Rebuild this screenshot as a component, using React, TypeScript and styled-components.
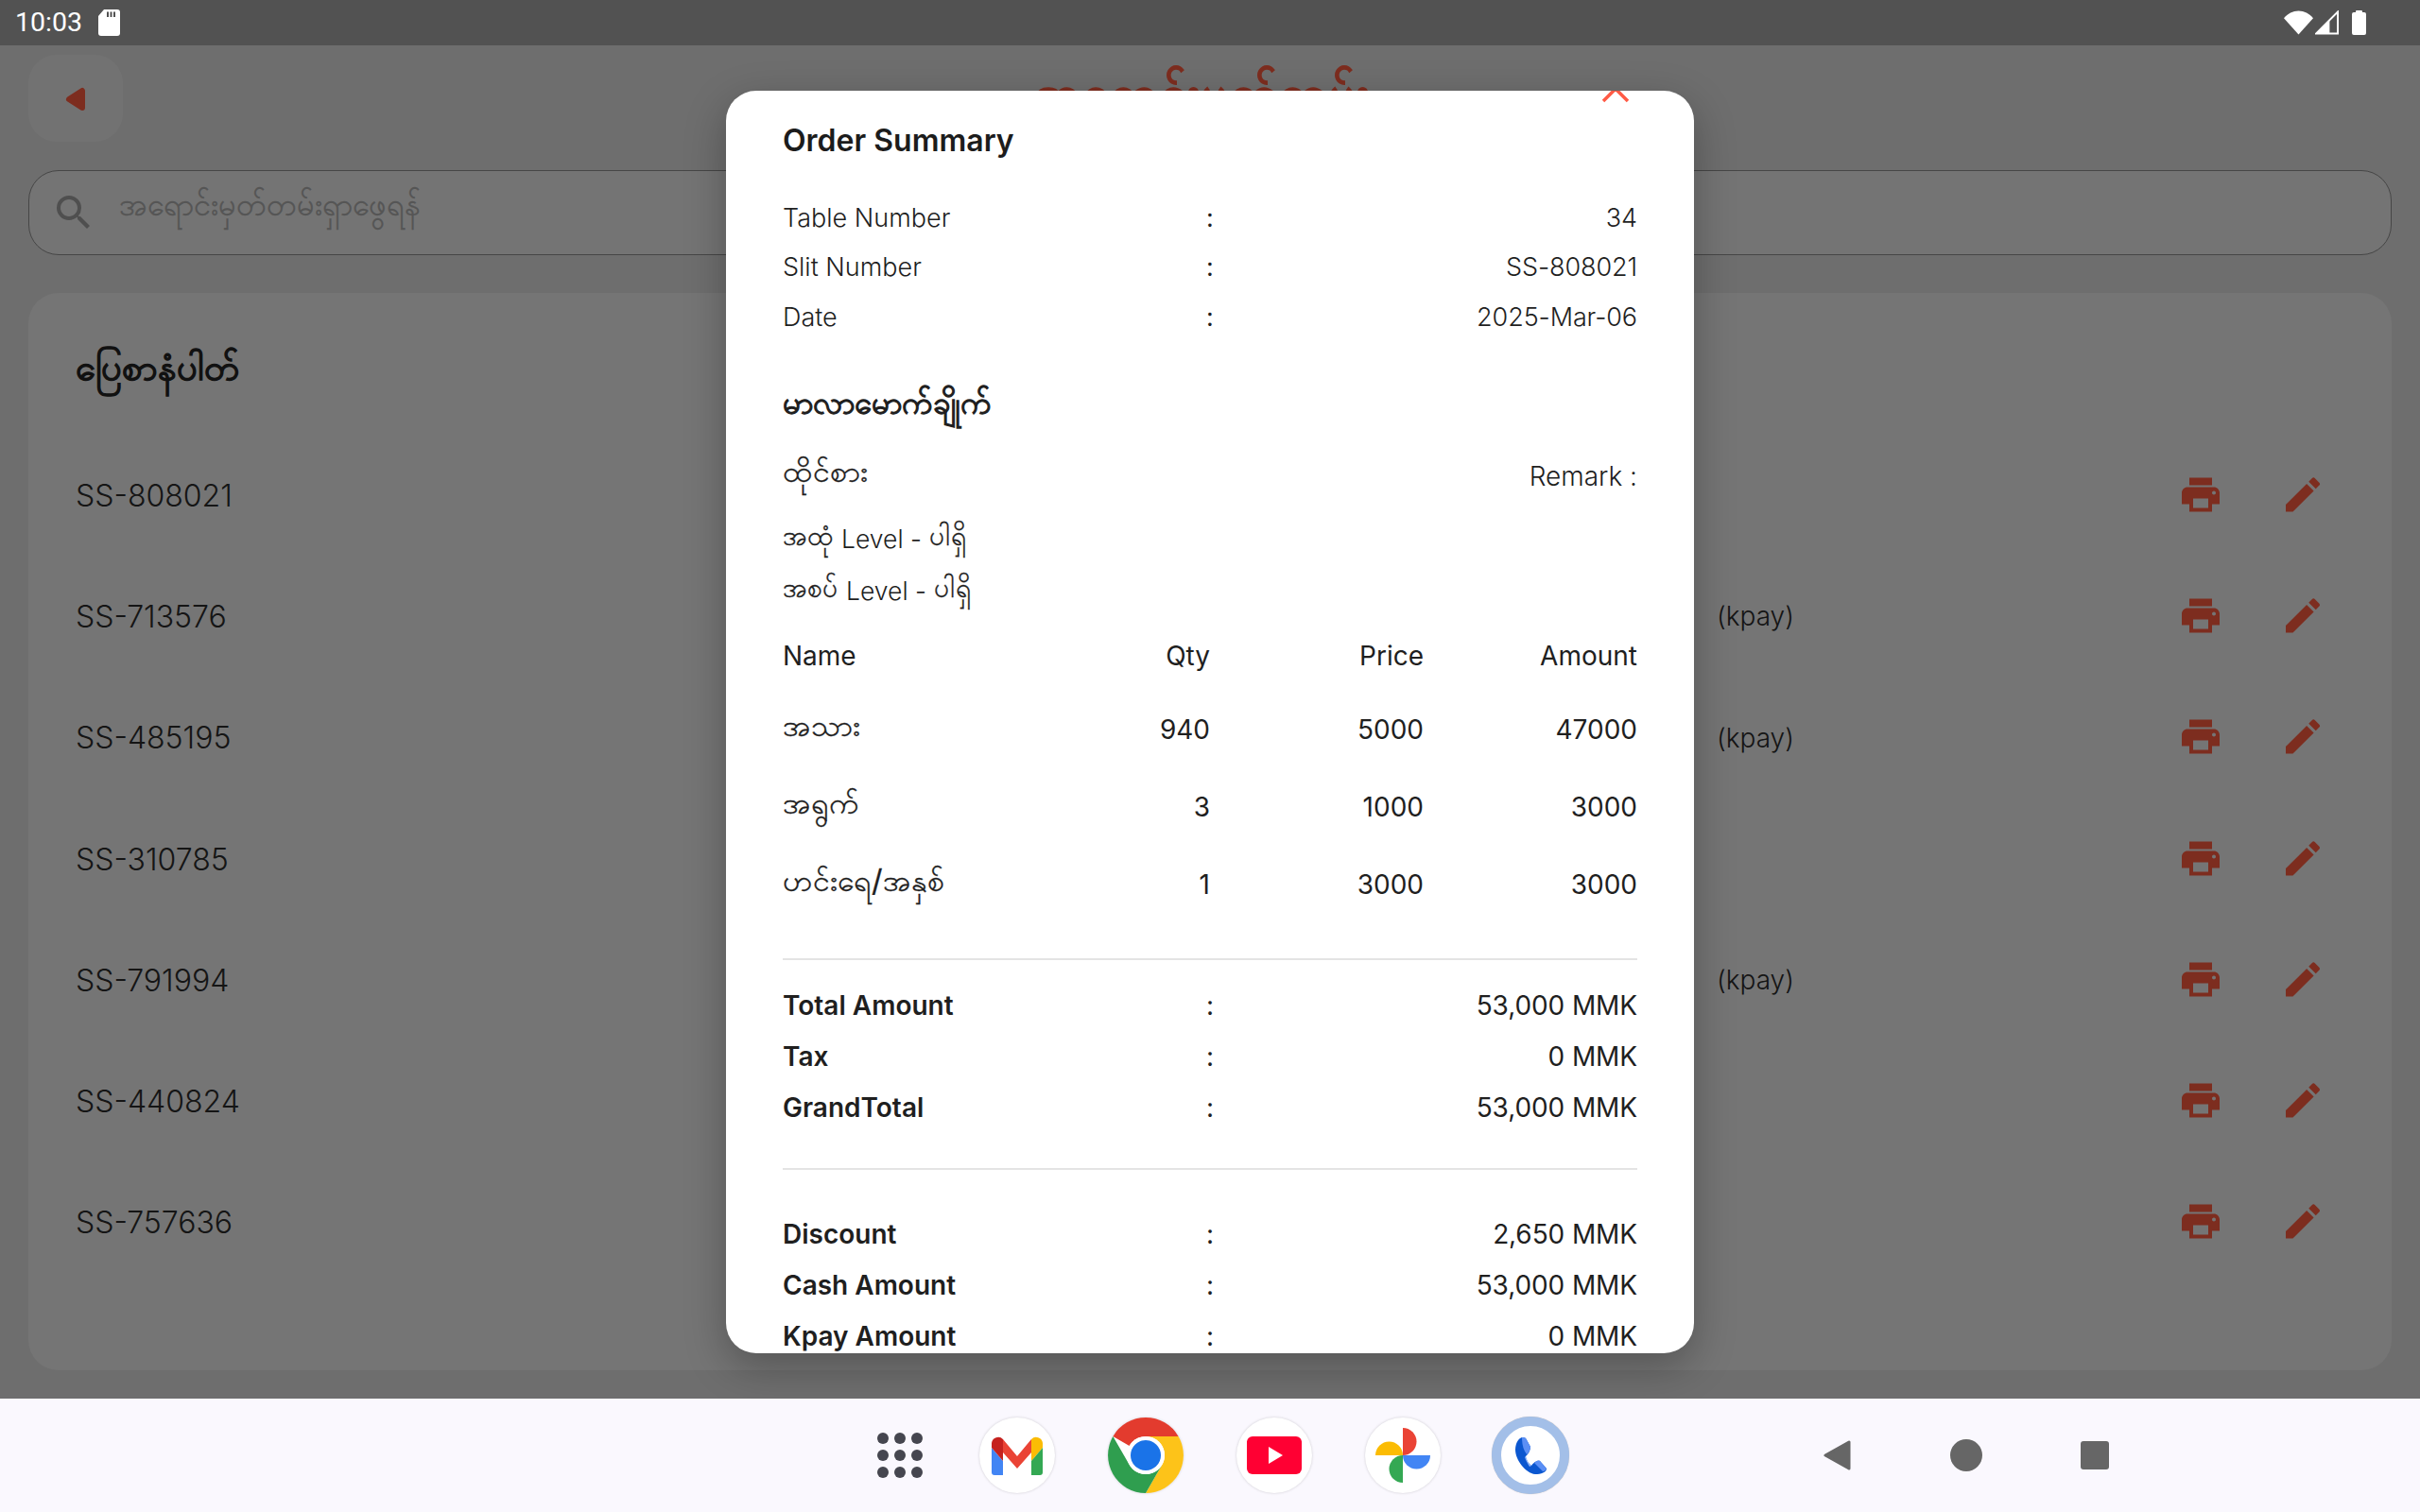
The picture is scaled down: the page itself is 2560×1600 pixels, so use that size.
import React from "react";
import styled, { createGlobalStyle } from "styled-components";
import { MdPrint, MdEdit, MdSearch } from "react-icons/md";

const Global = createGlobalStyle`
  html, body { margin: 0; padding: 0; width: 2560px; height: 1600px; overflow: hidden; }
  body { font-family: Inter, "Noto Sans", "DejaVu Sans", sans-serif; }
  * { box-sizing: border-box; }
`;

const Page = styled.div`
  width: 2560px; height: 1600px; display: flex; flex-direction: column; background: #faf8fe;
`;
const StatusBar = styled.div`
  height: 48px; flex: none; background: #525252; display: flex; align-items: center;
  padding: 0 57px 0 16px; color: #fff;
`;
const Clock = styled.span`
  font-family: Roboto, sans-serif; font-size: 28.5px; line-height: 48px; margin-right: 17px;
`;
const StatusRight = styled.div`
  margin-left: auto; display: flex; align-items: center; gap: 2px;
`;
const Screen = styled.div`
  position: relative; flex: 1; min-height: 0; background: #dcdcdc; padding: 10px 30px 30px;
  display: flex; flex-direction: column; overflow: hidden;
`;
const TopRow = styled.div`
  display: grid; grid-template-columns: 100px 1fr 100px; align-items: center; height: 92px; flex: none;
`;
const BackButton = styled.div`
  width: 100px; height: 92px; border-radius: 30px; background: #e5e5e5; display: flex;
  align-items: center; justify-content: center; padding-top: 2px;
`;
const PageTitle = styled.div`
  text-align: center; font-size: 53px; color: #fb5a3e; line-height: 60px; -webkit-text-stroke: 2px #fb5a3e;
  margin-top: -12px; margin-right: 18px;
`;
const SearchBar = styled.div`
  margin-top: 30px; height: 90px; flex: none; border: 1px solid #8c8c8c; border-radius: 32px; background: #e8e8e8;
  display: flex; align-items: center; padding: 0 23px; color: #9e9e9e;
`;
const Placeholder = styled.span`
  font-size: 32.3px; margin-left: 24px; margin-bottom: 10px; color: #aaaaaa; -webkit-text-stroke: 0.3px #aaaaaa;
`;
const Card = styled.div`
  margin-top: 40px; flex: 1; min-height: 0; border-radius: 32px; background: #eaeaea; padding: 43px 50px 0;
`;
const CardTitle = styled.div`
  height: 80px; display: flex; align-items: center; font-size: 38px; color: #222; -webkit-text-stroke: 1.6px #222;
`;
const ListRows = styled.div`
  margin-top: 27px; display: flex; flex-direction: column;
`;
const SlipRow = styled.div`
  height: 128.3px; display: grid; grid-template-columns: 1736px 1fr 48px 60px 48px; align-items: center;
  padding-right: 20px; color: #363636;
`;
const SlipNo = styled.span`
  font-size: 32px; font-weight: 300; color: #2a2a2a;
`;
const PayNote = styled.span`
  font-size: 28px; font-weight: 300; color: #2a2a2a;
`;
const RedIcon = styled.span`
  display: flex; color: #fb5a3e; font-size: 49px; justify-content: center; width: 48px; margin-bottom: 2px;
`;
const Scrim = styled.div`
  position: absolute; inset: -48px 0 0 0; background: rgba(0,0,0,0.5); display: flex;
  align-items: center; justify-content: center; padding-top: 48px;
`;
const Modal = styled.div`
  position: relative; width: 1024px; height: 1336px; background: #fff; border-radius: 32px; overflow: hidden;
  padding: 0 60px; box-shadow: 0 14px 44px rgba(0,0,0,0.28); color: #1f1f1f;
`;
const CloseMark = styled.svg`
  position: absolute; top: -18px; left: 925px; width: 32px; height: 32px;
`;
const ModalTitle = styled.div`
  margin-top: 29px; height: 48px; line-height: 48px; font-size: 32px; font-weight: 600; color: #1c1c1c;
`;
const InfoBlock = styled.div<{ $mt: number }>`
  margin-top: ${p => p.$mt}px;
`;
const InfoLine = styled.div<{ $h: number; $light?: boolean }>`
  height: ${p => p.$h}px; display: grid; grid-template-columns: 1fr 8px 1fr; align-items: center;
  font-size: ${p => (p.$light ? 27 : 28)}px; font-weight: ${p => (p.$light ? 300 : 400)};
`;
const Label = styled.span<{ $bold?: boolean }>`
  font-weight: ${p => (p.$bold ? 600 : "inherit")};
  font-size: ${p => (p.$bold ? "28px" : "inherit")};
`;
const Colon = styled.span`
  text-align: center; font-weight: 400;
`;
const Value = styled.span`
  text-align: right; letter-spacing: -0.1px;
`;
const SectionHead = styled.div`
  margin-top: 41.5px; height: 52px; display: flex; align-items: center; font-size: 33px;
  -webkit-text-stroke: 1.3px #1f1f1f;
`;
const DineRow = styled.div`
  margin-top: 23px; height: 52px; display: flex; align-items: center; justify-content: space-between; font-size: 28px;
  font-weight: 300;
`;
const DineText = styled.span`
  font-size: 32px; font-weight: 400; margin-bottom: 5px; -webkit-text-stroke: 0.3px #1f1f1f;
`;
const LevelBlock = styled.div`
  margin-top: 12.5px; font-size: 28px; -webkit-text-stroke: 0.3px #1f1f1f;
`;
const LevelLine = styled.div`
  height: 55px; display: flex; align-items: center; gap: 8px;
`;
const LevelLatin = styled.span`
  font-size: 26.5px; font-weight: 300; -webkit-text-stroke: 0;
`;
const ItemHead = styled.div`
  margin-top: 15.5px; height: 52px; display: grid; grid-template-columns: repeat(4, 1fr); align-items: center;
  font-size: 28px; font-weight: 400;
`;
const ItemRows = styled.div`
  margin-top: 11px;
`;
const ItemRow = styled.div`
  height: 82px; display: grid; grid-template-columns: repeat(4, 1fr); align-items: center; font-size: 28px;
`;
const ItemName = styled.span`
  font-size: 32px; margin-bottom: 3px; -webkit-text-stroke: 0.3px #1f1f1f;
`;
const Num = styled.span`
  text-align: right;
`;
const Rule = styled.div`
  margin-top: 37px; height: 2px; background: #e4e4e4;
`;
const NavBar = styled.div`
  position: relative; height: 120px; flex: none; background: #faf8fe; display: flex; align-items: center;
  padding-left: 928px;
`;
const AppsGrid = styled.div`
  width: 48px; display: grid; grid-template-columns: repeat(3, 12px); gap: 6px; margin-right: 60px;
`;
const Dot = styled.i`
  width: 12px; height: 12px; border-radius: 50%; background: #45464f; display: block;
`;
const Dock = styled.div`
  display: flex; gap: 56px; align-items: center;
`;
const AppCircle = styled.div`
  width: 80px; height: 80px; border-radius: 50%; background: #fff; display: flex; align-items: center;
  justify-content: center; box-shadow: 0 0 3px rgba(0,0,0,0.18);
`;
const PhoneRing = styled(AppCircle)`
  box-shadow: 0 0 1px rgba(120,110,90,0.5); border: 10px solid #a3bfe8; width: 82px; height: 82px; margin-left: -2px;
`;
const SysButtons = styled.div`
  margin-left: 267px; display: flex; align-items: center; gap: 102px;
`;

const SdCard = () => (
  <svg width="23" height="28" viewBox="0 0 23 28">
    <path d="M6 0H20a3 3 0 0 1 3 3V25a3 3 0 0 1-3 3H3a3 3 0 0 1-3-3V7Z" fill="#fff" />
    <path d="M9 2.5h2V8H9zM12.5 2.5h2V8h-2zM16 2.5h2V8h-2z" fill="#525252" />
  </svg>
);
const Wifi = () => (
  <svg width="31" height="26" viewBox="0 0 32 26">
    <path d="M0 8C4 3 10 0 16 0s12 3 16 8L16 26Z" fill="#fff" />
  </svg>
);
const Signal = () => (
  <svg width="25" height="26" viewBox="0 0 26 26">
    <path d="M25 1V25H1Z" fill="none" stroke="#fff" strokeWidth="2" />
    <path d="M16 10V25H1Z" fill="#fff" />
  </svg>
);
const Battery = () => (
  <svg width="15" height="26" viewBox="0 0 15 26" style={{ marginLeft: 12 }}>
    <path d="M4 2V1a1 1 0 0 1 1-1h5a1 1 0 0 1 1 1v1h2a2 2 0 0 1 2 2v20a2 2 0 0 1-2 2H2a2 2 0 0 1-2-2V4a2 2 0 0 1 2-2Z" fill="#fff" />
  </svg>
);
const Gmail = () => (
  <svg width="54" height="41" viewBox="0 0 54 41">
    <path d="M0 12 12 26V41H3a3 3 0 0 1-3-3Z" fill="#4285f4" />
    <path d="M0 7a7 7 0 0 1 12-4V26L0 12Z" fill="#c5221f" />
    <path d="M12 3 27 21 42 3V17L27 34 12 17Z" fill="#ea4335" />
    <path d="M42 3a7 7 0 0 1 12 4V12L42 26Z" fill="#fbbc04" />
    <path d="M54 12V38a3 3 0 0 1-3 3H42V26Z" fill="#34a853" />
  </svg>
);
const Chrome = () => (
  <svg width="80" height="80" viewBox="0 0 80 80">
    <path d="M40 0A40 40 0 0 1 74.6 20H40A20 20 0 0 0 22.7 30L5.4 20A40 40 0 0 1 40 0Z" fill="#e33b2e" />
    <path d="M74.6 20A40 40 0 0 1 40 80L57.3 50A20 20 0 0 0 40 20Z" fill="#fdc319" />
    <path d="M40 80A40 40 0 0 1 5.4 20L22.7 50A20 20 0 0 0 57.3 50Z" fill="#2f9e4f" />
    <circle cx="40" cy="40" r="20" fill="#fff" />
    <circle cx="40" cy="40" r="16" fill="#1a73e8" />
  </svg>
);
const YouTube = () => (
  <svg width="58" height="40" viewBox="0 0 58 40">
    <rect width="58" height="40" rx="6" fill="#ff0033" />
    <path d="M23 11 38 20 23 29Z" fill="#fff" />
  </svg>
);
const Photos = () => (
  <svg width="60" height="60" viewBox="0 0 60 60">
    <path d="M30 30V1A14.5 14.5 0 0 1 30 30Z" fill="#ea4335" />
    <path d="M30 30H1A14.5 14.5 0 0 1 30 30Z" fill="#fbbc04" />
    <path d="M30 30H59A14.5 14.5 0 0 1 30 30Z" fill="#4285f4" />
    <path d="M30 30V59A14.5 14.5 0 0 1 30 30Z" fill="#34a853" />
  </svg>
);
const Phone = () => (
  <svg width="33" height="39" viewBox="0 0 33 39">
    <path d="M7 0C3 1 0 7 0 13C0 24 11 38 21 39C27 39 33 37 33 33L26 25C23 24 19 27 17 30C14 28 11 23 11 20C14 18 16 13 16 10L11 1C10 0 8 0 7 0Z" fill="#0b57d0" />
    <path d="M7 0C8 0 10 0 11 1L16 10C16 13 14 17 12 18C8 13 7 6 7 0Z" fill="#5b8ff5" />
    <path d="M26 25L33 33C32 35 31 36 29 36L20 27C22 25 24 24 26 25Z" fill="#5b8ff5" />
    <path d="M11 20C12 24 14 27 17 30L15 31C13 28 11 24 10 21Z" fill="#8fb4f8" />
  </svg>
);
const BackChevron = () => (
  <svg width="24" height="28" viewBox="0 0 24 28">
    <path d="M19 5V23L5 14Z" fill="#fb5a3e" stroke="#fb5a3e" strokeWidth="6" strokeLinejoin="round" />
  </svg>
);

const slips: [string, string][] = [
  ["SS-808021", ""],
  ["SS-713576", "(kpay)"],
  ["SS-485195", "(kpay)"],
  ["SS-310785", ""],
  ["SS-791994", "(kpay)"],
  ["SS-440824", ""],
  ["SS-757636", ""],
];

const items = [
  ["အသား", "940", "5000", "47000"],
  ["အရွက်", "3", "1000", "3000"],
  ["ဟင်းရေ/အနှစ်", "1", "3000", "3000"],
];

const Info = ({ label, value, h, bold, light }: { label: string; value: string; h: number; bold?: boolean; light?: boolean }) => (
  <InfoLine $h={h} $light={light}>
    <Label $bold={bold}>{label}</Label>
    <Colon>:</Colon>
    <Value>{value}</Value>
  </InfoLine>
);

export default function App() {
  return (
    <Page>
      <Global />
      <StatusBar>
        <Clock>10:03</Clock>
        <SdCard />
        <StatusRight>
          <Wifi />
          <Signal />
          <Battery />
        </StatusRight>
      </StatusBar>
      <Screen>
        <TopRow>
          <BackButton><BackChevron /></BackButton>
          <PageTitle>အရောင်းမှတ်တမ်း</PageTitle>
        </TopRow>
        <SearchBar>
          <MdSearch size={48} />
          <Placeholder>အရောင်းမှတ်တမ်းရှာဖွေရန်</Placeholder>
        </SearchBar>
        <Card>
          <CardTitle>ပြေစာနံပါတ်</CardTitle>
          <ListRows>
            {slips.map(([no, note]) => (
              <SlipRow key={no}>
                <SlipNo>{no}</SlipNo>
                <PayNote>{note}</PayNote>
                <RedIcon><MdPrint /></RedIcon>
                <span />
                <RedIcon><MdEdit /></RedIcon>
              </SlipRow>
            ))}
          </ListRows>
        </Card>
        <Scrim>
          <Modal>
            <CloseMark viewBox="0 0 32 32">
              <path d="M3 3 29 29M29 3 3 29" stroke="#ff5a45" strokeWidth="3.5" fill="none" />
            </CloseMark>
            <ModalTitle>Order Summary</ModalTitle>
            <InfoBlock $mt={31}>
              <Info label="Table Number" value="34" h={52.5} light />
              <Info label="Slit Number" value="SS-808021" h={52.5} light />
              <Info label="Date" value="2025-Mar-06" h={52.5} light />
            </InfoBlock>
            <SectionHead>မာလာမောက်ချိုက်</SectionHead>
            <DineRow>
              <DineText>ထိုင်စား</DineText>
              <span>Remark :</span>
            </DineRow>
            <LevelBlock>
              <LevelLine>အထုံ <LevelLatin>Level -</LevelLatin> ပါရှိ</LevelLine>
              <LevelLine>အစပ် <LevelLatin>Level -</LevelLatin> ပါရှိ</LevelLine>
            </LevelBlock>
            <ItemHead>
              <span>Name</span><Num>Qty</Num><Num>Price</Num><Num>Amount</Num>
            </ItemHead>
            <ItemRows>
              {items.map(r => (
                <ItemRow key={r[0]}>
                  <ItemName>{r[0]}</ItemName><Num>{r[1]}</Num><Num>{r[2]}</Num><Num>{r[3]}</Num>
                </ItemRow>
              ))}
            </ItemRows>
            <Rule />
            <InfoBlock $mt={21}>
              <Info label="Total Amount" value="53,000 MMK" h={54} bold />
              <Info label="Tax" value="0 MMK" h={54} bold />
              <Info label="GrandTotal" value="53,000 MMK" h={54} bold />
            </InfoBlock>
            <Rule />
            <InfoBlock $mt={41}>
              <Info label="Discount" value="2,650 MMK" h={54} bold />
              <Info label="Cash Amount" value="53,000 MMK" h={54} bold />
              <Info label="Kpay Amount" value="0 MMK" h={54} bold />
            </InfoBlock>
          </Modal>
        </Scrim>
      </Screen>
      <NavBar>
        <AppsGrid>{Array.from({ length: 9 }, (_, i) => <Dot key={i} />)}</AppsGrid>
        <Dock>
          <AppCircle><Gmail /></AppCircle>
          <AppCircle><Chrome /></AppCircle>
          <AppCircle><YouTube /></AppCircle>
          <AppCircle><Photos /></AppCircle>
          <PhoneRing><Phone /></PhoneRing>
        </Dock>
        <SysButtons>
          <svg width="34" height="34" viewBox="0 0 34 34"><path d="M29 3V31L4 17Z" fill="#666" stroke="#666" strokeWidth="3" strokeLinejoin="round" /></svg>
          <svg width="34" height="34" viewBox="0 0 34 34"><circle cx="17" cy="17" r="17" fill="#666" /></svg>
          <svg width="34" height="34" viewBox="0 0 34 34"><rect x="2" y="2" width="30" height="30" rx="3" fill="#666" /></svg>
        </SysButtons>
      </NavBar>
    </Page>
  );
}
